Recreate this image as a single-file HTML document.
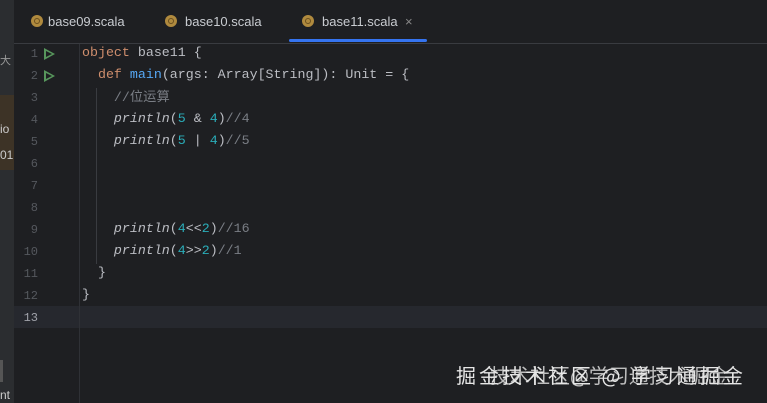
<!DOCTYPE html><html><head><style>
body{margin:0;width:767px;height:403px;background:#1e1f22;overflow:hidden;position:relative;font-family:"Liberation Mono",monospace;}
.side{position:absolute;left:0;top:0;width:14px;height:403px;background:#2b2d30;}
.brown{position:absolute;left:0;top:95px;width:14px;height:75px;background:#3d3326;}
.tabbar{position:absolute;left:14px;top:0;right:0;height:43px;background:#1e1f22;border-bottom:1px solid #393b40;}
.tab{position:absolute;top:14px;font:13px "Liberation Sans",sans-serif;color:#c9ccd1;}
.ic{position:absolute;top:15px;width:12px;height:12px;border-radius:50%;background:#b08a3e;}
.ic:after{content:"";position:absolute;left:3px;top:3px;width:4px;height:4px;border:1px solid #6b5020;border-radius:50%;}
.ul{position:absolute;left:289px;top:39px;width:138px;height:3px;background:#3574f0;border-radius:2px;}
.ln{position:absolute;left:18px;width:20px;text-align:right;font-size:12px;color:#55585e;}
.code{position:absolute;left:82px;font-size:13.3px;color:#bcbec4;white-space:pre;}
.k{color:#cf8e6d}.f{color:#56a8f5}.n{color:#2aacb8}.c{color:#7a7e85}.i{font-style:italic}
.play{position:absolute;left:44px;width:0;height:0;border-left:11px solid #57965c;border-top:6px solid transparent;border-bottom:6px solid transparent;}
.play:after{content:"";position:absolute;left:-9px;top:-3.5px;border-left:6px solid #1e1f22;border-top:3.5px solid transparent;border-bottom:3.5px solid transparent;}
.cur{position:absolute;left:14px;right:0;top:306px;height:22px;background:#26282e;}
.wm{position:absolute;top:360px;font:20px "Noto Sans CJK SC",sans-serif;color:#e6e6e6;white-space:nowrap;}
</style></head><body>
<div class="side"></div><div class="brown"></div>
<div style="position:absolute;left:0;top:52px;font:11px 'Noto Sans CJK SC',sans-serif;color:#999">大</div>
<div style="position:absolute;left:0;top:122px;font:12px 'Liberation Sans';color:#ccc">io</div>
<div style="position:absolute;left:0;top:148px;font:12px 'Liberation Sans';color:#ccc">01</div>
<div style="position:absolute;left:0;top:360px;width:3px;height:22px;background:#555"></div>
<div style="position:absolute;left:0;top:388px;font:12px 'Liberation Sans';color:#ccc">nt</div>
<div class="tabbar"></div>
<div class="ic" style="left:31px"></div><div class="tab" style="left:48px">base09.scala</div>
<div class="ic" style="left:165px"></div><div class="tab" style="left:185px">base10.scala</div>
<div class="ic" style="left:302px"></div><div class="tab" style="left:322px">base11.scala</div>
<div class="tab" style="left:405px;color:#888">×</div>
<div class="ul"></div>
<div class="cur"></div>
<div style="position:absolute;left:79px;top:44px;width:1px;height:359px;background:#2f3136"></div>
<div style="position:absolute;left:96px;top:88px;width:1px;height:176px;background:#393b40"></div>
<div class="play" style="top:48px"></div><div class="play" style="top:70px"></div>
<div class="ln" style="top:47px">1</div><div class="ln" style="top:69px">2</div><div class="ln" style="top:91px">3</div><div class="ln" style="top:113px">4</div><div class="ln" style="top:135px">5</div><div class="ln" style="top:157px">6</div><div class="ln" style="top:179px">7</div><div class="ln" style="top:201px">8</div><div class="ln" style="top:223px">9</div><div class="ln" style="top:245px">10</div><div class="ln" style="top:267px">11</div><div class="ln" style="top:289px">12</div><div class="ln" style="top:311px;color:#a1a3ab">13</div>
<div class="code" style="top:45px"><span class="k">object</span> base11 {</div>
<div class="code" style="top:67px">  <span class="k">def</span> <span class="f">main</span>(args: Array[String]): Unit = {</div>
<div class="code" style="top:88px">    <span class="c" style="font-family:'Liberation Mono','Noto Sans CJK SC',monospace;position:relative;top:-2px">//位运算</span></div>
<div class="code" style="top:111px">    <span class="i">println</span>(<span class="n">5</span> &amp; <span class="n">4</span>)<span class="c">//4</span></div>
<div class="code" style="top:133px">    <span class="i">println</span>(<span class="n">5</span> | <span class="n">4</span>)<span class="c">//5</span></div>
<div class="code" style="top:221px">    <span class="i">println</span>(<span class="n">4</span>&lt;&lt;<span class="n">2</span>)<span class="c">//16</span></div>
<div class="code" style="top:243px">    <span class="i">println</span>(<span class="n">4</span>&gt;&gt;<span class="n">2</span>)<span class="c">//1</span></div>
<div class="code" style="top:265px">  }</div>
<div class="code" style="top:287px">}</div>
<div class="wm" style="left:456px;letter-spacing:3px">掘金技术社区 @ 学习通掘金</div>
<div class="wm" style="left:490px;opacity:.8">技术社区@学习通技术掘金</div>
</body></html>
